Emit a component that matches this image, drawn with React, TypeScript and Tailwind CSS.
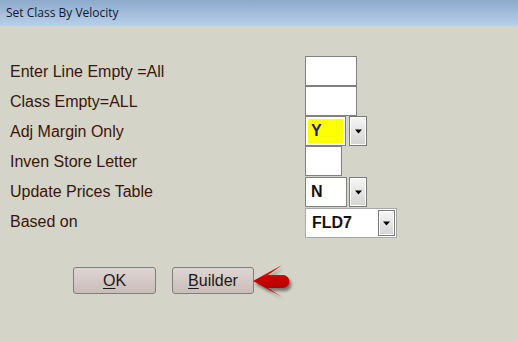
import React from "react";

const label = "font-['Liberation_Sans',Arial,sans-serif] text-[16px] leading-[30px] text-[#3a1608]";

const DropButton = ({ className = "" }: { className?: string }) => (
  <div className={`flex items-center justify-center border border-[#7a7a7a] bg-gradient-to-b from-[#f6f6f6] to-[#d4d4d4] shadow-[inset_0_0_0_1px_#ffffff] ${className}`}>
    <svg width="7" height="5" viewBox="0 0 7 5">
      <path d="M0 0.5 H7 L3.5 4.5 Z" fill="#000" />
    </svg>
  </div>
);

const TextBox = ({ w, value, yellow, blue }: { w: string; value?: string; yellow?: boolean; blue?: boolean }) => (
  <div className={`${w} h-[30px] border border-[#808080] p-[2px] bg-white`}>
    <div
      className={`h-full w-full flex items-center pl-[3px] font-['Liberation_Sans',Arial,sans-serif] text-[16px] font-bold ${yellow ? "bg-[#ffff00]" : "bg-white"} ${blue ? "text-[#1c1c8c]" : "text-[#111]"}`}
    >
      {value}
    </div>
  </div>
);

// red call-out arrow pointing at Builder
const Arrow = () => (
  <svg width="46" height="40" viewBox="0 0 46 40" className="ml-[-2px] mt-[-4px]">
    <defs>
      <linearGradient id="red" x1="0" y1="0" x2="0" y2="1">
        <stop offset="0" stopColor="#e20a0a" />
        <stop offset="1" stopColor="#a60000" />
      </linearGradient>
      <filter id="sh" x="-20%" y="-20%" width="160%" height="160%">
        <feDropShadow dx="2" dy="3" stdDeviation="1.6" floodColor="#000" floodOpacity="0.45" />
      </filter>
    </defs>
    <path
      d="M1 18 L30 2 Q22 8 16 12 L31 12 A6.5 6.5 0 0 1 31 25 L16 25 Q22 29 30 34 Z"
      fill="url(#red)"
      filter="url(#sh)"
    />
  </svg>
);

export default function App() {
  const rows: { text: string; field: React.ReactNode }[] = [
    { text: "Enter Line Empty =All", field: <TextBox w="w-[52px]" /> },
    { text: "Class Empty=ALL", field: <TextBox w="w-[52px]" /> },
    {
      text: "Adj Margin Only",
      field: (
        <div className="flex gap-[3px]">
          <TextBox w="w-[41px]" value="Y" yellow blue />
          <DropButton className="w-[18px] h-[30px]" />
        </div>
      ),
    },
    { text: "Inven Store Letter", field: <TextBox w="w-[37px]" /> },
    {
      text: "Update Prices Table",
      field: (
        <div className="flex gap-[2px] pt-[1px]">
          <TextBox w="w-[42px]" value="N" />
          <DropButton className="w-[18px] h-[30px]" />
        </div>
      ),
    },
    {
      text: "Based on",
      field: (
        <div className="mt-[2px] w-[92px] h-[30px] border border-[#a8a8a8] bg-white flex items-center justify-between pl-[6px] pr-[1px]">
          <span className="font-['Liberation_Sans',Arial,sans-serif] text-[16px] font-bold text-[#111]">FLD7</span>
          <DropButton className="w-[17px] h-[26px]" />
        </div>
      ),
    },
  ];

  return (
    <div className="w-[518px] h-[341px] bg-[#d4d4c8] overflow-hidden">
      <div className="h-[26px] bg-gradient-to-b from-[#8eaacb] to-[#b8d0e9] flex items-center pl-[6px] pb-[1px]">
        <span className="font-['Open_Sans','Noto_Sans',sans-serif] text-[12px] text-[#16162a]">Set Class By Velocity</span>
      </div>

      <div className="pt-[30px] grid grid-cols-[295px_auto] pl-[10px]">
        {rows.map((r) => (
          <React.Fragment key={r.text}>
            <div className={`${label} h-[30px] pt-[1px]`}>{r.text}</div>
            <div className="h-[30px]">{r.field}</div>
          </React.Fragment>
        ))}
      </div>

      <div className="flex pl-[73px] pt-[31px] gap-[16px] items-start">
        <button className="w-[83px] h-[27px] rounded-[3px] border border-[#7e7e7e] bg-gradient-to-b from-[#ded5d2] to-[#c9bdb9] font-['Liberation_Sans',Arial,sans-serif] text-[16px] text-[#1a1a1a]">
          <span className="underline underline-offset-2">O</span>K
        </button>
        <div className="flex items-start">
          <button className="w-[82px] h-[27px] rounded-[3px] border border-[#7e7e7e] bg-gradient-to-b from-[#ded5d2] to-[#c9bdb9] font-['Liberation_Sans',Arial,sans-serif] text-[16px] text-[#1a1a1a]">
            <span className="underline underline-offset-2">B</span>uilder
          </button>
          <Arrow />
        </div>
      </div>
    </div>
  );
}
